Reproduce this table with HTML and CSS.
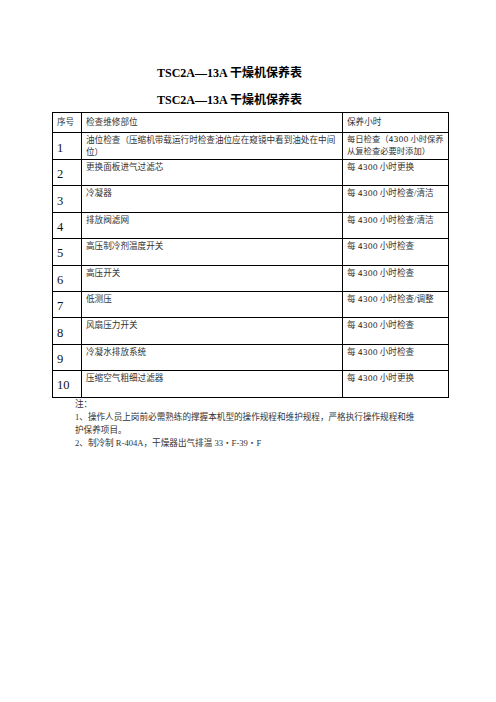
FILE: index.html
```html
<!DOCTYPE html>
<html lang="zh">
<head>
<meta charset="utf-8">
<link rel="stylesheet" href="styles.css">
</head>
<body>
<div class="page">
  <h1 class="title">TSC2A—13A 干燥机保养表</h1>
  <h2 class="title second">TSC2A—13A 干燥机保养表</h2>
  <table class="sheet">
    <colgroup><col class="c1"><col class="c2"><col class="c3"></colgroup>
    <tr class="head"><td class="hd">序号</td><td>检查维修部位</td><td>保养小时</td></tr>
    <tr class="r1"><td class="no">1</td><td>油位检查（压缩机带载运行时检查油位应在窥镜中看到油处在中间位）</td><td class="tight">每日检查（<span class="d">4300</span> 小时保养<br>从复检查必要时添加）</td></tr>
    <tr><td class="no">2</td><td>更换面板进气过滤芯</td><td>每 <span class="d">4300</span> 小时更换</td></tr>
    <tr><td class="no">3</td><td>冷凝器</td><td>每 <span class="d">4300</span> 小时检查/清洁</td></tr>
    <tr><td class="no">4</td><td>排放阀滤网</td><td>每 <span class="d">4300</span> 小时检查/清洁</td></tr>
    <tr><td class="no">5</td><td>高压制冷剂温度开关</td><td>每 <span class="d">4300</span> 小时检查</td></tr>
    <tr><td class="no">6</td><td>高压开关</td><td>每 <span class="d">4300</span> 小时检查</td></tr>
    <tr><td class="no">7</td><td>低测压</td><td>每 <span class="d">4300</span> 小时检查/调整</td></tr>
    <tr><td class="no">8</td><td>风扇压力开关</td><td>每 <span class="d">4300</span> 小时检查</td></tr>
    <tr><td class="no">9</td><td>冷凝水排放系统</td><td>每 <span class="d">4300</span> 小时检查</td></tr>
    <tr><td class="no">10</td><td>压缩空气粗细过滤器</td><td>每 <span class="d">4300</span> 小时更换</td></tr>
  </table>
  <div class="notes">
    <p>注：</p>
    <p>1、操作人员上岗前必需熟练的撑握本机型的操作规程和维护规程，严格执行操作规程和维护保养项目。</p>
    <p>2、制冷制 R-404A，干燥器出气排温 33・F-39・F</p>
  </div>
</div>
</body>
</html>
```

FILE: styles.css
```css
html, body {
  margin: 0;
  padding: 0;
  background: #ffffff;
}
.page {
  width: 496px;
  height: 702px;
  padding-top: 65px;
  box-sizing: border-box;
  font-family: "Liberation Serif", "Noto Sans CJK SC", serif;
  color: #222;
}
.title {
  margin: 0 0 0 157px;
  font-size: 12px;
  line-height: 16px;
  font-weight: bold;
  color: #000;
}
.second {
  margin-top: 11px;
}
.sheet {
  margin: 4px 0 0 52px;
  width: 396px;
  border-collapse: collapse;
  table-layout: fixed;
  font-size: 8.6px;
  line-height: 12px;
  color: #333;
}
.c1 { width: 29px; }
.c2 { width: 261px; }
.c3 { width: 106px; }
.sheet td {
  border: 1px solid #000;
  vertical-align: top;
  padding: 1px 2px 0 4px;
  height: 26.4px;
  box-sizing: border-box;
}
.sheet .head td {
  height: 20px;
  padding-top: 3px;
}
.sheet .r1 td {
  height: 27px;
}
.sheet td.tight {
  white-space: nowrap;
  font-size: 8.3px;
  padding-right: 0;
}
.sheet td.no {
  vertical-align: middle;
  font-size: 12.5px;
  color: #111;
  padding: 3px 0 0 4px;
}
.sheet td.hd {
  padding-left: 4px;
  padding-right: 0;
}
.d {
  font-family: "DejaVu Sans", "Liberation Sans", sans-serif;
  font-size: 7.8px;
  color: #222;
}
.notes {
  margin: 0 0 0 75px;
  width: 348px;
  font-size: 8.6px;
  line-height: 13.3px;
  color: #333;
}
.notes p {
  margin: 0;
}
```
